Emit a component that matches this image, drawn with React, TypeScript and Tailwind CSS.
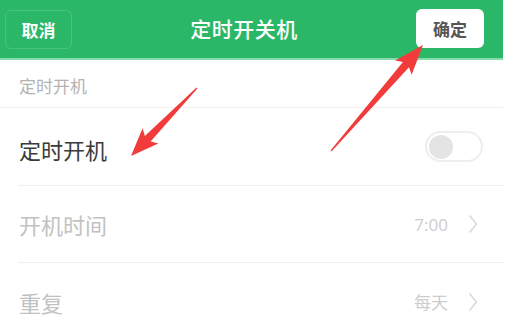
import React from "react";

type Pt = [number, number];

// tapered red pointer drawn over the screen
function Arrow({ from, to, head = 28, wing = 11 }: { from: Pt; to: Pt; head?: number; wing?: number }) {
  const [tx, ty] = from;
  const [px, py] = to;
  const len = Math.hypot(px - tx, py - ty);
  const ux = (px - tx) / len;
  const uy = (py - ty) / len;
  const nx = -uy;
  const ny = ux;
  const bx = px - ux * head;
  const by = py - uy * head;
  const pts: Pt[] = [
    [tx + nx * 0.6, ty + ny * 0.6],
    [bx + ux * 4 + nx * 4, by + uy * 4 + ny * 4],
    [bx + nx * wing, by + ny * wing],
    [px, py],
    [bx - nx * wing, by - ny * wing],
    [bx + ux * 4 - nx * 4, by + uy * 4 - ny * 4],
    [tx - nx * 0.6, ty - ny * 0.6],
  ];
  return <polygon points={pts.map((p) => p.join(",")).join(" ")} fill="#f23b3b" />;
}

function Chevron() {
  return (
    <svg width="10" height="20" viewBox="0 0 10 20" className="ml-[20px]">
      <path d="M1.5 1.5 L8.5 10 L1.5 18.5" fill="none" stroke="#d4d4d4" strokeWidth="1.3" />
    </svg>
  );
}

export default function App() {
  return (
    <div
      className="relative w-[508px] h-[329px] overflow-hidden bg-white"
      style={{ fontFamily: '"Noto Sans CJK SC", "Noto Sans", sans-serif' }}
    >
      <div className="w-[503px]">
        {/* Header */}
        <div className="h-[58px] bg-[#2bb768] flex items-center justify-between pl-[5px] pr-[19px]">
          <button className="w-[67px] h-[39px] rounded-[6px] border border-white/15 text-white text-[17px] font-bold leading-none">
            取消
          </button>
          <h1 className="text-white text-[21px] font-medium leading-none tracking-[0.5px] -mt-[2px]">定时开关机</h1>
          <button className="w-[68px] h-[39px] -mt-[2px] rounded-[6px] bg-white text-[#555] text-[17px] font-bold leading-none">
            确定
          </button>
        </div>
        <div className="h-[2px] bg-[#86dbab]" />

        {/* Section title */}
        <div className="h-[48px] flex items-end pb-[13px] pl-[19px] border-b border-[#efefef]">
          <span className="text-[17px] leading-none text-[#b3b3b3]">定时开机</span>
        </div>

        <div className="pl-[18px]">
          {/* Switch row */}
          <div className="h-[78px] flex items-center justify-between border-b border-[#efefef] pr-[20px]">
            <span className="text-[22px] leading-none text-[#3a3a3a] mt-[4px] ml-[1px]">定时开机</span>
            <div className="w-[58px] h-[31px] rounded-full border-2 border-[#eeeeee] flex items-center pl-[2px]">
              <div className="w-[24px] h-[24px] rounded-full bg-[#e4e4e4]" />
            </div>
          </div>

          <div className="h-[77px] flex items-center justify-between border-b border-[#efefef] pr-[25px]">
            <span className="text-[22px] leading-none text-[#c2c2c2] ml-[1px]">开机时间</span>
            <div className="flex items-center">
              <span className="text-[17px] leading-none text-[#cccccc] ml-[2px]" style={{ fontFamily: '"Open Sans", sans-serif' }}>
                7:00
              </span>
              <Chevron />
            </div>
          </div>

          <div className="h-[77px] flex items-center justify-between pr-[25px]">
            <span className="text-[22px] leading-none text-[#c2c2c2] ml-[1px]">重复</span>
            <div className="flex items-center">
              <span className="text-[17px] leading-none text-[#cccccc]">每天</span>
              <Chevron />
            </div>
          </div>
        </div>
      </div>

      {/* annotation arrows */}
      <svg className="absolute inset-0 pointer-events-none" width="508" height="329">
        <Arrow from={[197, 88]} to={[131, 156]} />
        <Arrow from={[331, 151]} to={[423, 45]} head={30} />
      </svg>
    </div>
  );
}
